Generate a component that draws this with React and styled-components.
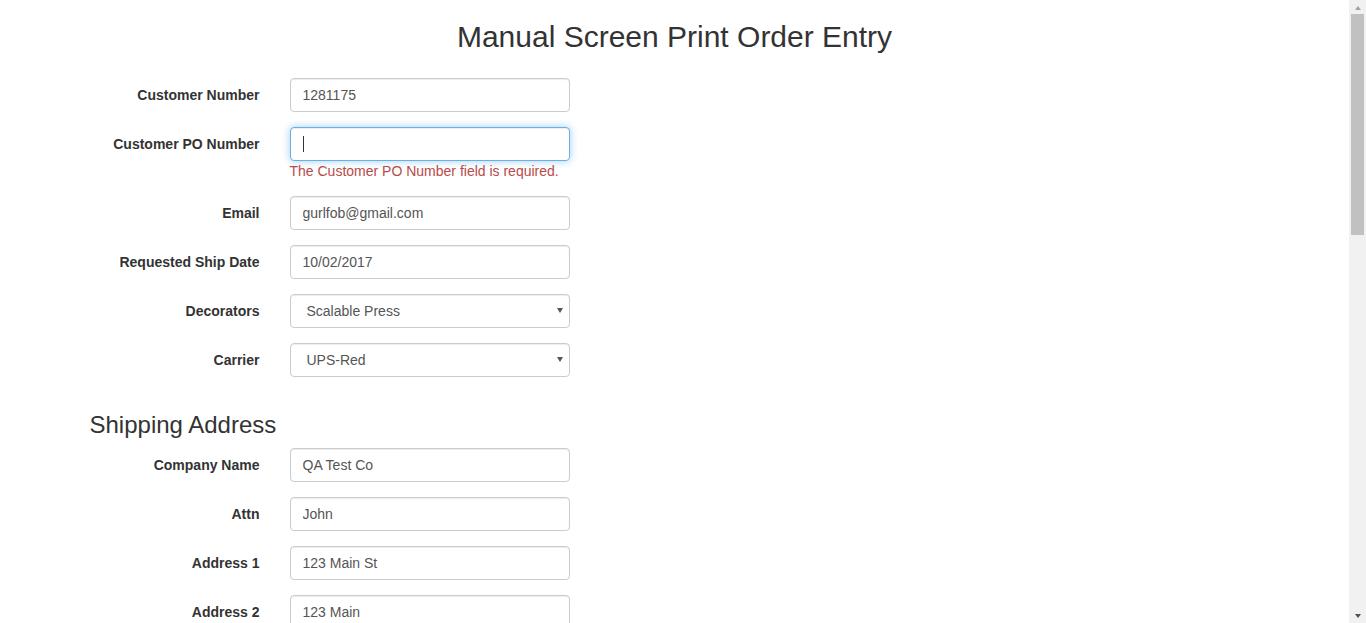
import React from "react";
import styled, { createGlobalStyle } from "styled-components";

const Global = createGlobalStyle`
  html, body { margin: 0; padding: 0; background: #fff; overflow: hidden; }
  body {
    font-family: "Liberation Sans", Arial, Helvetica, sans-serif;
    font-size: 14px;
    line-height: 1.42857;
    color: #333;
  }
  * { box-sizing: border-box; }
`;

const Shell = styled.div`
  display: flex;
  height: 100vh;
  overflow: hidden;
`;

const Main = styled.main`
  flex: 1;
  min-width: 0;
  overflow: hidden;
`;

const ScrollBar = styled.div`
  width: 17px;
  flex: none;
  display: flex;
  flex-direction: column;
  background: #f1f1f1;
`;

const ScrollButton = styled.div`
  height: ${(p) => p.$h}px;
  display: flex;
  align-items: center;
  justify-content: center;
  padding-top: ${(p) => (p.$down ? 2 : 1)}px;
`;

const Tri = styled.span`
  width: 0;
  height: 0;
  border-left: 3.5px solid transparent;
  border-right: 3.5px solid transparent;
  ${(p) =>
    p.$down
      ? `border-top: 4px solid ${p.$color};`
      : `border-bottom: 4px solid ${p.$color};`}
`;

const Track = styled.div`
  flex: 1;
  padding: 0 2px;
`;

const Thumb = styled.div`
  height: 221px;
  background: #c1c1c1;
`;

const Page = styled.div`
  width: 1170px;
  margin: 0 auto;
`;

const Heading = styled.h2`
  font-size: 30px;
  font-weight: 500;
  line-height: 1.1;
  margin: 20px 0 25px;
  text-align: center;
  color: #333;
`;

const Section = styled.h3`
  font-size: 24px;
  font-weight: 500;
  line-height: 1.1;
  margin: 35px 0 10px;
  color: #333;
`;

const Row = styled.div`
  display: grid;
  grid-template-columns: 170px 280px;
  column-gap: 30px;
  margin-bottom: 15px;
`;

const Label = styled.label`
  text-align: right;
  font-weight: 700;
  padding-top: 7px;
  line-height: 20px;
`;

const Field = styled.div`
  position: relative;
  display: flex;
  flex-direction: column;
`;

const Input = styled.input`
  display: block;
  width: 280px;
  height: 34px;
  padding: 6px 12px;
  font-family: inherit;
  font-size: 14px;
  line-height: 1.42857;
  color: #555;
  background: #fff;
  border: 1px solid ${(p) => (p.$focus ? "#66afe9" : "#ccc")};
  border-radius: 4px;
  box-shadow: ${(p) =>
    p.$focus
      ? "inset 0 1px 1px rgba(0,0,0,.075), 0 0 8px rgba(102,175,233,.6)"
      : "inset 0 1px 1px rgba(0,0,0,.075)"};
  outline: none;
`;

const Select = styled.select`
  display: block;
  width: 280px;
  height: 34px;
  padding: 6px 12px 6px 16px;
  font-family: inherit;
  font-size: 14px;
  color: #555;
  background: #fff;
  border: 1px solid #ccc;
  border-radius: 4px;
  box-shadow: inset 0 1px 1px rgba(0,0,0,.075);
  appearance: none;
  -webkit-appearance: none;
  outline: none;
`;

const Arrow = styled.span`
  position: absolute;
  top: 14px;
  left: 267px;
  width: 0;
  height: 0;
  border-left: 3px solid transparent;
  border-right: 3px solid transparent;
  border-top: 5px solid #555;
  pointer-events: none;
`;

const Caret = styled.span`
  position: absolute;
  top: 9px;
  left: 13px;
  width: 1px;
  height: 16px;
  background: #333;
  pointer-events: none;
`;

const Error = styled.span`
  color: #b94a48;
  line-height: 20px;
`;

function TextRow({ label, value, focus, error }) {
  return (
    <Row>
      <Label>{label}</Label>
      <Field>
        <Input $focus={focus} defaultValue={value} readOnly />
        {focus && <Caret />}
        {error && <Error>{error}</Error>}
      </Field>
    </Row>
  );
}

function SelectRow({ label, value }) {
  return (
    <Row>
      <Label>{label}</Label>
      <Field>
        <Select defaultValue={value}>
          <option>{value}</option>
        </Select>
        <Arrow />
      </Field>
    </Row>
  );
}

export default function App() {
  return (
    <>
      <Global />
      <Shell>
        <Main>
          <Heading>Manual Screen Print Order Entry</Heading>
          <Page>
            <TextRow label="Customer Number" value="1281175" />
            <TextRow
              label="Customer PO Number"
              value=""
              focus
              error="The Customer PO Number field is required."
            />
            <TextRow label="Email" value="gurlfob@gmail.com" />
            <TextRow label="Requested Ship Date" value="10/02/2017" />
            <SelectRow label="Decorators" value="Scalable Press" />
            <SelectRow label="Carrier" value="UPS-Red" />

            <Section>Shipping Address</Section>
            <TextRow label="Company Name" value="QA Test Co" />
            <TextRow label="Attn" value="John" />
            <TextRow label="Address 1" value="123 Main St" />
            <TextRow label="Address 2" value="123 Main" />
          </Page>
        </Main>
        <ScrollBar>
          <ScrollButton $h={14}>
            <Tri $color="#a3a3a3" />
          </ScrollButton>
          <Track>
            <Thumb />
          </Track>
          <ScrollButton $h={17} $down>
            <Tri $down $color="#505050" />
          </ScrollButton>
        </ScrollBar>
      </Shell>
    </>
  );
}
